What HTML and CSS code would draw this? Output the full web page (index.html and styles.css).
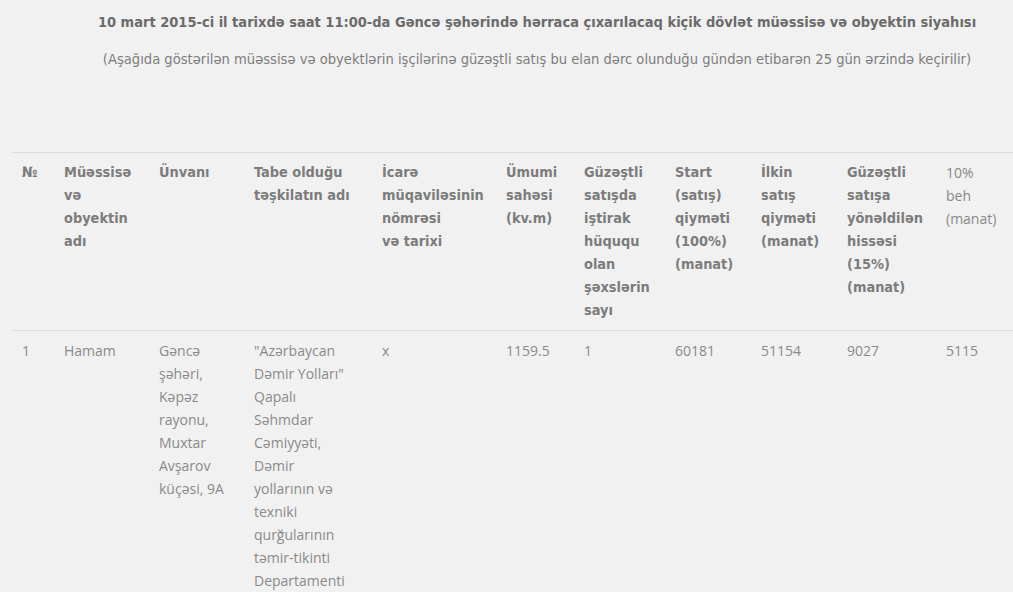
FILE: index.html
```html
<!DOCTYPE html>
<html lang="az">
<head>
<meta charset="utf-8">
<title>Hərrac siyahısı</title>
<link rel="stylesheet" href="styles.css">
</head>
<body>
<div class="page">
  <p class="title">10 mart 2015-ci il tarixdə saat 11:00-da Gəncə şəhərində hərraca çıxarılacaq kiçik dövlət müəssisə və obyektin siyahısı</p>
  <p class="subtitle">(Aşağıda göstərilən müəssisə və obyektlərin işçilərinə güzəştli satış bu elan dərc olunduğu gündən etibarən 25 gün ərzində keçirilir)</p>
  <table class="list">
    <colgroup>
      <col class="c1"><col class="c2"><col class="c3"><col class="c4"><col class="c5"><col class="c6"><col class="c7"><col class="c8"><col class="c9"><col class="c10"><col class="c11">
    </colgroup>
    <thead>
      <tr>
        <th>№</th>
        <th>Müəssisə<br>və<br>obyektin<br>adı</th>
        <th>Ünvanı</th>
        <th>Tabe olduğu<br>təşkilatın adı</th>
        <th>İcarə<br>müqaviləsinin<br>nömrəsi<br>və tarixi</th>
        <th>Ümumi<br>sahəsi<br>(kv.m)</th>
        <th>Güzəştli<br>satışda<br>iştirak<br>hüququ<br>olan<br>şəxslərin<br>sayı</th>
        <th>Start<br>(satış)<br>qiyməti<br>(100%)<br>(manat)</th>
        <th>İlkin<br>satış<br>qiyməti<br>(manat)</th>
        <th>Güzəştli<br>satışa<br>yönəldilən<br>hissəsi<br>(15%)<br>(manat)</th>
        <th class="plain">10%<br>beh<br>(manat)</th>
      </tr>
    </thead>
    <tbody>
      <tr>
        <td>1</td>
        <td>Hamam</td>
        <td>Gəncə<br>şəhəri,<br>Kəpəz<br>rayonu,<br>Muxtar<br>Avşarov<br>küçəsi, 9A</td>
        <td>"Azərbaycan<br>Dəmir Yolları"<br>Qapalı<br>Səhmdar<br>Cəmiyyəti,<br>Dəmir<br>yollarının və<br>texniki<br>qurğularının<br>təmir-tikinti<br>Departamenti</td>
        <td>x</td>
        <td>1159.5</td>
        <td>1</td>
        <td>60181</td>
        <td>51154</td>
        <td>9027</td>
        <td>5115</td>
      </tr>
    </tbody>
  </table>
</div>
</body>
</html>
```

FILE: styles.css
```css
html, body {
  margin: 0;
  padding: 0;
  overflow: hidden;
  background: #f1f1f1;
}

body {
  font-family: "Open Sans", "DejaVu Sans", sans-serif;
  font-size: 14px;
  color: #888888;
}

.page {
  width: 1052px;
  margin-left: 11px;
}

.title {
  margin: 12px 0 0;
  text-align: center;
  font-family: "DejaVu Sans Condensed", "DejaVu Sans", sans-serif;
  font-weight: bold;
  font-size: 14.5px;
  line-height: 20px;
  color: #6b6b6b;
}

.subtitle {
  margin: 17px 0 0;
  text-align: center;
  font-family: "DejaVu Sans Condensed", "DejaVu Sans", sans-serif;
  font-size: 14.6px;
  line-height: 20px;
  color: #7d7d7d;
}

.list {
  margin-top: 83px;
  width: 1052px;
  table-layout: fixed;
  border-collapse: collapse;
}

.c1 { width: 42px; }
.c2 { width: 95px; }
.c3 { width: 95px; }
.c4 { width: 128px; }
.c5 { width: 124px; }
.c6 { width: 78px; }
.c7 { width: 91px; }
.c8 { width: 86px; }
.c9 { width: 86px; }
.c10 { width: 99px; }
.c11 { width: 128px; }

.list th,
.list td {
  padding: 8px 11px;
  text-align: left;
  vertical-align: top;
  line-height: 23px;
  border-top: 1px solid #dddddd;
}

.list th {
  font-family: "DejaVu Sans Condensed", "DejaVu Sans", sans-serif;
  font-weight: bold;
  font-size: 14.4px;
  color: #7c7c7c;
}

.list th.plain {
  font-family: "Open Sans", sans-serif;
  font-weight: normal;
  font-size: 14px;
  color: #888888;
}

.list td {
  color: #8a8a8a;
}
```
